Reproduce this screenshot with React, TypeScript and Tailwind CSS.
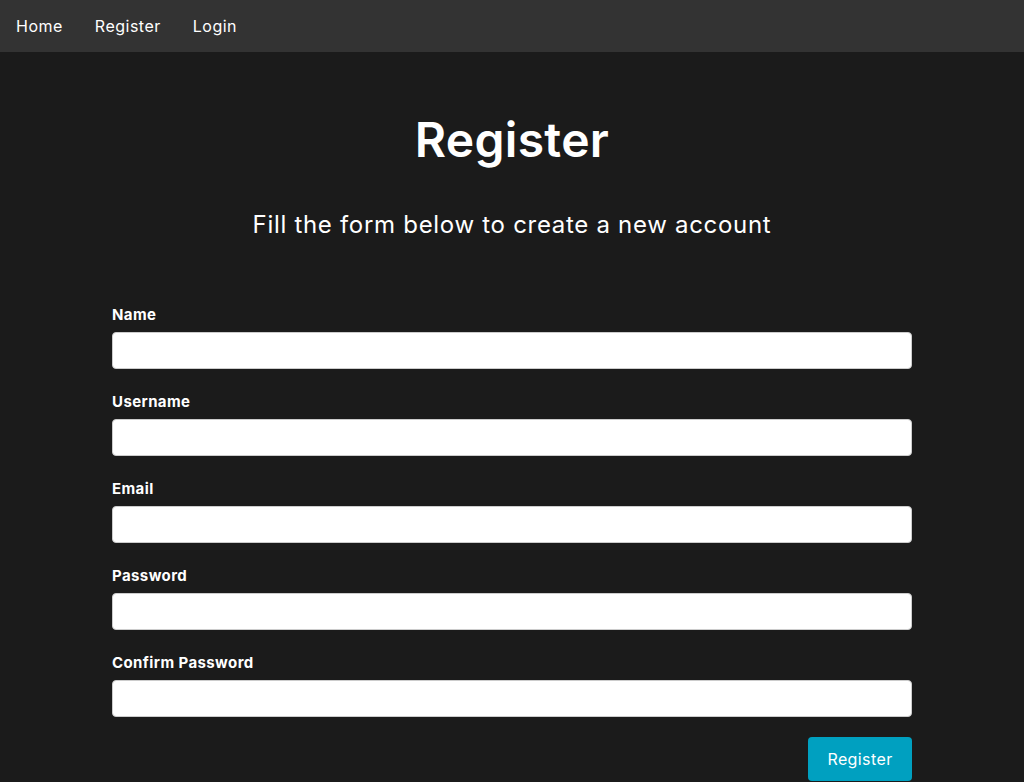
const fields = ["Name", "Username", "Email", "Password", "Confirm Password"];

export default function App() {
	return (
		<div className="min-h-screen bg-[#1b1b1b] text-white font-['Inter',sans-serif]">
			<nav className="h-[52px] bg-[#333333] flex items-center px-4 gap-8 text-[16px] tracking-[0.5px]">
				<a href="#">Home</a>
				<a href="#">Register</a>
				<a href="#">Login</a>
			</nav>
			<div className="w-[800px] mx-auto">
				<h1 className="text-center text-[48px] font-semibold mt-[56px] leading-[64px] tracking-[0.3px]">Register</h1>
				<p className="text-center text-[24px] mt-[36px] leading-[34px] tracking-[0.7px]">Fill the form below to create a new account</p>
				<form className="mt-[62px] flex flex-col gap-[22px]">
					{fields.map((f) => (
						<div key={f}>
							<label className="block text-[15px] font-bold leading-[22px] mb-[6px] tracking-[0.4px]">{f}</label>
							<input
								type={f.includes("Password") ? "password" : "text"}
								className="block w-full h-[37px] bg-white rounded-[4px] border border-[#cccccc] text-black"
							/>
						</div>
					))}
					<div className="flex justify-end -mt-[2px]">
						<button type="button" className="h-[44px] w-[104px] bg-[#00a0c0] rounded-[4px] text-[16px] tracking-[0.4px]">Register</button>
					</div>
				</form>
			</div>
		</div>
	);
}
